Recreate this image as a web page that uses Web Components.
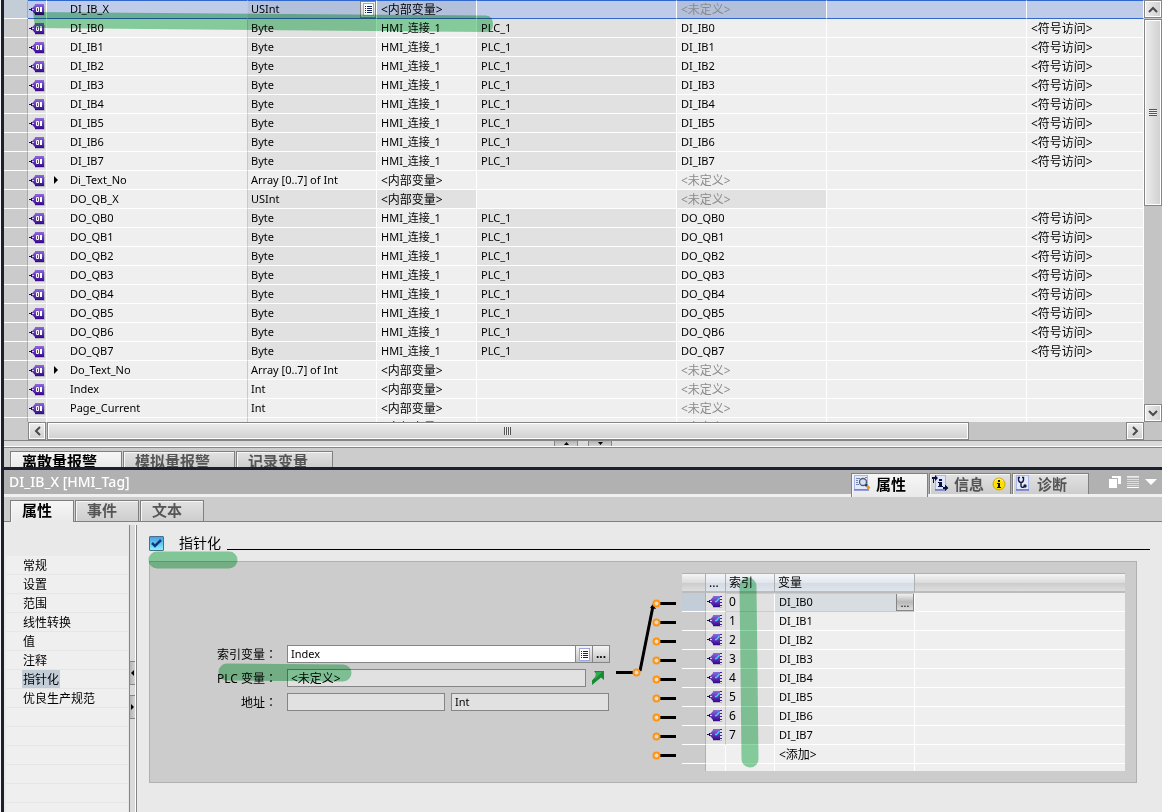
<!DOCTYPE html>
<html lang="zh-CN">
<head>
<meta charset="UTF-8">
<title>HMI_Tag</title>
<style>
    html, body {
        height: 100%;
        margin: 0;
    }
    body {
        overflow: hidden;
        font-family: "Noto Sans", "Noto Sans CJK SC", sans-serif;
        font-size: 11px;
        color: #000;
        background: #f4f4f4;
    }
</style>
</head>
<body>
<hmi-workspace>
    <tag-editor slot="editor"></tag-editor>
    <tag-inspector slot="inspector" heading="DI_IB_X [HMI_Tag]">
        <side-nav slot="nav" items="常规,设置,范围,线性转换,值,注释,指针化,优良生产规范" current="指针化"></side-nav>
        <pointer-settings></pointer-settings>
    </tag-inspector>
</hmi-workspace>

<script>
const ICONS = {
    tag: `<svg width="17" height="13" viewBox="0 0 17 13">
        <defs><linearGradient id="g" x2="0" y2="1"><stop stop-color="#8f68de"/><stop offset="1" stop-color="#36078e"/></linearGradient></defs>
        <path d="M6 12.500H15.500V3" fill="none" stroke="#b9b9c2"/>
        <path d="M2 6.500L6 2V1H15V12H6V11Z" fill="url(#g)"/>
        <path d="M0 6.500H3M2.500 5V8" stroke="#1e0a5a" fill="none"/>
        <path d="M3 6h2v1h-2z" fill="#d8ccf6"/>
        <path d="M7.500 4.500H9.500V8.500H7.500Z" fill="none" stroke="#fff"/>
        <path d="M12 4V9" stroke="#fff" stroke-width="2"/>
    </svg>`,
    link: `<svg width="17" height="13" viewBox="0 0 17 13">
        <defs><linearGradient id="g" x2="0" y2="1"><stop stop-color="#8f68de"/><stop offset="1" stop-color="#36078e"/></linearGradient></defs>
        <path d="M6 12.500H15" stroke="#b4b4bc"/>
        <path d="M2 6.500L6 2V1H13V12H6V11Z" fill="url(#g)"/>
        <path d="M0 6.500H3M2.500 5V8" stroke="#1e0a5a" fill="none"/>
        <path d="M3 6h2v1h-2z" fill="#d8ccf6"/>
        <path d="M13 1.500H15M13 4.500H15M13 7.500H15M13 10.500H15" stroke="#4a1aa6"/>
        <path d="M8 6.500H9.500L12.500 3" fill="none" stroke="#35d4f6" stroke-width="1.300"/>
    </svg>`,
    list: `<svg width="11" height="13" viewBox="0 0 11 13">
        <rect x=".5" y=".5" width="10" height="12" fill="#fff" stroke="#9aa7dc"/>
        <path d="M2 3.500H3M2 5.500H3M2 7.500H3M2 9.500H3M4 3.500H9M4 5.500H9M4 7.500H9M4 9.500H9" stroke="#14225e"/>
    </svg>`,
    props: `<svg width="17" height="16" viewBox="0 0 17 16">
        <rect x=".5" y=".5" width="13" height="14" fill="#e4eafc" stroke="#a9b6ee"/>
        <path d="M0 15H15" stroke="#3c50cc" stroke-width="1"/>
        <path d="M2 3.500H6M2 5.500H4M2 7.500H4M2 9.500H5M11 2.500H13" stroke="#7485b4"/>
        <circle cx="9" cy="7" r="3.500" fill="#cfe2f4" stroke="#555a72" stroke-width="1.300"/>
        <path d="M11.500 9.500L13 11" stroke="#1c3a86" stroke-width="2.500"/>
        <path d="M13 11L15.500 13.500" stroke="#e09a18" stroke-width="2.500"/>
    </svg>`,
    info: `<svg width="17" height="16" viewBox="0 0 17 16">
        <rect x="3.500" y=".5" width="10" height="14" fill="#dfe6fb" stroke="#a9b6ee"/>
        <path d="M3 15H14" stroke="#3c50cc"/>
        <path d="M0 2H3V0L6 3L3 6V4H0Z" fill="#0b0f45"/>
        <path d="M1.500 4V8" stroke="#0b0f45"/>
        <path d="M7 4H10V6H7ZM6 7H10V11H11V12H6V11H7V8H6Z" fill="#0b0f45"/>
        <path d="M11 12H13V9.500L16.500 13L13 16V14H11Z" fill="#0b0f45"/>
    </svg>`,
    badge: `<svg width="14" height="14" viewBox="0 0 14 14">
        <circle cx="7" cy="7" r="6" fill="#fbe000" stroke="#d0a800"/>
        <path d="M3 4Q7 0 11 4" stroke="#fff6a0" fill="none"/>
        <path d="M6 3H8V5H6ZM5 6H8V10H9V11H5V10H6V7H5Z" fill="#111"/>
    </svg>`,
    diag: `<svg width="17" height="16" viewBox="-1 0 17 16">
        <rect x=".5" y=".5" width="12" height="14" fill="#e4eafc" stroke="#a9b6ee"/>
        <path d="M0 15H13" stroke="#3c50cc"/>
        <path d="M4 2.500H2.500V5Q3 7.500 5 7.500Q7 7.500 7.500 5V2.500H6M5 8V11Q5.500 13 8 12" fill="none" stroke="#15193f" stroke-width="1.400"/>
        <circle cx="9" cy="11" r="1.700" fill="#15193f"/>
    </svg>`,
    windows: `<svg width="12" height="12" viewBox="0 0 12 12"><path d="M3 0H12V8H9V2H3Z" fill="#fff"/><path d="M0 3H8V12H0Z" fill="#fff"/></svg>`,
    rows: `<svg width="12" height="12" viewBox="0 0 12 12"><path d="M0 .5H12M0 3.500H12M0 5.500H12M0 7.500H12M0 9.500H12" stroke="#dcdcdc"/><path d="M0 1H12M0 11.500H12" stroke="#fff"/></svg>`,
    drop: `<svg width="12" height="12" viewBox="0 0 12 12"><path d="M0 3H12L6 9Z" fill="#fff"/></svg>`,
    jump: `<svg width="14" height="14" viewBox="0 0 14 14"><path d="M3 0H13V9L10 6.500L1 14V9.500L6 4Z" fill="#168a34"/><path d="M5 1H11L4 8.500Z" fill="#2faa4c"/></svg>`,
    expand: `<svg width="4" height="8" viewBox="0 0 4 8"><path d="M0 0L4 4L0 8Z"/></svg>`,
    up: `<svg width="10" height="7" viewBox="0 0 10 7"><path d="M1 6L5 2L9 6" fill="none" stroke="#4a4a4a" stroke-width="2"/></svg>`,
    down: `<svg width="10" height="7" viewBox="0 0 10 7"><path d="M1 1L5 5L9 1" fill="none" stroke="#4a4a4a" stroke-width="2"/></svg>`,
    left: `<svg width="7" height="10" viewBox="0 0 7 10"><path d="M6 1L2 5L6 9" fill="none" stroke="#4a4a4a" stroke-width="2"/></svg>`,
    right: `<svg width="7" height="10" viewBox="0 0 7 10"><path d="M1 1L5 5L1 9" fill="none" stroke="#4a4a4a" stroke-width="2"/></svg>`,
    miniup: `<svg width="5" height="3" viewBox="0 0 5 3"><path d="M0 3L2.500 0L5 3Z"/></svg>`,
    minidown: `<svg width="5" height="3" viewBox="0 0 5 3"><path d="M0 0L2.500 3L5 0Z"/></svg>`,
    minileft: `<svg width="3" height="6" viewBox="0 0 3 6"><path d="M3 0L0 3L3 6Z"/></svg>`,
    miniright: `<svg width="3" height="6" viewBox="0 0 3 6"><path d="M0 0L3 3L0 6Z"/></svg>`
};

class UiIcon extends HTMLElement {
    constructor() {
        super();
        this.attachShadow({ mode: 'open' });
    }

    connectedCallback() {
        this.shadowRoot.innerHTML = `
            <style>
                :host { display: inline-flex; flex: none; }
                svg { display: block; }
            </style>
            ${ICONS[this.getAttribute('name')] || ''}
        `;
    }
}

// Stacks the editor above the inspector, with the dark window frame on the left
class HmiWorkspace extends HTMLElement {
    constructor() {
        super();
        this.attachShadow({ mode: 'open' });
        this.shadowRoot.innerHTML = `
            <style>
                :host {
                    display: flex;
                    flex-direction: column;
                    box-sizing: border-box;
                    height: 100vh;
                    margin-left: 1px;
                    border-left: 3px solid #1a2030;
                    background: #ccc;
                }
                .editor { flex: 467 1 0; min-height: 0; display: flex; }
                .inspector {
                    flex: 342 1 0;
                    min-height: 0;
                    display: flex;
                    border-top: 3px solid #1a2030;
                }
                ::slotted(*) { flex: 1; min-width: 0; }
            </style>
            <div class="editor"><slot name="editor"></slot></div>
            <div class="inspector"><slot name="inspector"></slot></div>
        `;
    }
}

class ScrollBar extends HTMLElement {
    constructor() {
        super();
        this.attachShadow({ mode: 'open' });
    }

    connectedCallback() {
        const vertical = this.hasAttribute('vertical');
        const size = this.getAttribute('size');
        const rest = this.getAttribute('rest');
        this.shadowRoot.innerHTML = `
            <style>
                :host {
                    display: flex;
                    flex-direction: ${vertical ? 'column' : 'row'};
                    gap: 1px;
                    background: #c4c4c4;
                }
                button, .thumb {
                    box-sizing: border-box;
                    display: flex;
                    align-items: center;
                    justify-content: center;
                    padding: 0;
                    border: 1px solid #858585;
                    box-shadow: inset 0 0 0 1px #fff;
                    background: linear-gradient(${vertical ? 'to right' : 'to bottom'}, #ececec, #d0d0d0);
                }
                button { flex: none; width: 18px; height: 18px; }
                .thumb { flex: ${size} 1 0; }
                .rest { flex: ${rest} 1 0; }
                .grip {
                    width: ${vertical ? '8px' : '7px'};
                    height: ${vertical ? '7px' : '8px'};
                    background: repeating-linear-gradient(${vertical ? 'to bottom' : 'to right'}, #555 0 1px, #eee 1px 2px);
                }
            </style>
            <button aria-label="${vertical ? '向上' : '向左'}"><ui-icon name="${vertical ? 'up' : 'left'}"></ui-icon></button>
            <div class="thumb"><div class="grip"></div></div>
            <div class="rest"></div>
            <button aria-label="${vertical ? '向下' : '向右'}"><ui-icon name="${vertical ? 'down' : 'right'}"></ui-icon></button>
        `;
    }
}

class SplitBar extends HTMLElement {
    constructor() {
        super();
        this.attachShadow({ mode: 'open' });
    }

    connectedCallback() {
        const vertical = this.hasAttribute('vertical');
        const icons = vertical ? ['minileft', 'miniright'] : ['miniup', 'minidown'];
        this.shadowRoot.innerHTML = `
            <style>
                :host {
                    display: flex;
                    flex: none;
                    flex-direction: ${vertical ? 'column' : 'row'};
                    justify-content: center;
                    gap: 10px;
                    box-sizing: border-box;
                    ${vertical ? 'width' : 'height'}: 8px;
                    border: 0 solid #858585;
                    border-width: ${vertical ? '0 1px' : '1px 0'};
                    box-shadow: inset ${vertical ? '-1px 0' : '0 -1px'} #fff;
                    background: #dadada;
                }
                button {
                    display: flex;
                    align-items: center;
                    justify-content: center;
                    box-sizing: border-box;
                    padding: 0;
                    border: 0 solid #858585;
                    ${vertical
                        ? 'width: 5px; height: 24px; border-width: 1px 0;'
                        : 'width: 24px; height: 5px; border-width: 0 1px;'}
                    background: linear-gradient(${vertical ? 'to right' : 'to bottom'}, #b4b4b4, #d4d4d4);
                }
            </style>
            ${icons.map(name => `<button aria-label="${name}"><ui-icon name="${name}"></ui-icon></button>`).join('')}
        `;
    }
}

class TabItem extends HTMLElement {
    constructor() {
        super();
        this.attachShadow({ mode: 'open' });
        this.shadowRoot.innerHTML = `
            <style>
                :host { display: flex; }
                button {
                    display: flex;
                    align-items: start;
                    gap: 5px;
                    box-sizing: border-box;
                    padding: var(--tab-padding, 0 21px 0 11px);
                    border: 1px solid #808080;
                    border-bottom: 0;
                    box-shadow: inset 1px 1px #f6f6f6;
                    background: linear-gradient(#e2e2e2, #cdcdcd);
                    color: #555;
                    font: bold 15px/18px "Noto Sans", "Noto Sans CJK SC", sans-serif;
                    white-space: nowrap;
                }
                :host([active]) button {
                    background: linear-gradient(#f6f6f6, #e9e9e9);
                    color: #000;
                }
            </style>
            <button><slot></slot></button>
        `;
    }
}

const BYTE_TAGS = prefix => Array.from({ length: 8 }, (_, i) => ({
    name: `${prefix}${i}`, type: 'Byte', conn: 'HMI_连接_1', plc: 'PLC_1',
    plcTag: `${prefix}${i}`, access: '<符号访问>', off: ['type', 'plc']
}));

const INNER_TAG = (name, type, extra = {}) => ({
    name, type, conn: '<内部变量>', plc: '', plcTag: '<未定义>', access: '', off: [], ...extra
});

const TAGS = [
    INNER_TAG('DI_IB_X', 'USInt', { off: ['type', 'conn', 'plcTag'], selected: true }),
    ...BYTE_TAGS('DI_IB'),
    INNER_TAG('Di_Text_No', 'Array [0..7] of Int', { group: true }),
    INNER_TAG('DO_QB_X', 'USInt', { off: ['type', 'conn', 'plcTag'] }),
    ...BYTE_TAGS('DO_QB'),
    INNER_TAG('Do_Text_No', 'Array [0..7] of Int', { group: true }),
    INNER_TAG('Index', 'Int'),
    INNER_TAG('Page_Current', 'Int'),
    INNER_TAG('', '')
];

function escapeText(text) {
    return text.replace(/&/g, '&amp;').replace(/</g, '&lt;').replace(/>/g, '&gt;');
}

class TagTable extends HTMLElement {
    constructor() {
        super();
        this.attachShadow({ mode: 'open' });
        this.shadowRoot.innerHTML = `
            <style>
                :host { display: block; overflow: hidden; background: #efefef; }
                table {
                    width: 100%;
                    table-layout: fixed;
                    border-collapse: separate;
                    border-spacing: 0;
                }
                td {
                    box-sizing: border-box;
                    height: 19px;
                    padding: 0 0 0 4px;
                    border: 0 solid #fff;
                    border-width: 0 1px 1px 0;
                    background: #efefef;
                    line-height: 18px;
                    vertical-align: top;
                    white-space: nowrap;
                    overflow: hidden;
                }
                td.gutter { background: #cbcbcb; border-right-color: #a8a8a8; }
                td.icon { padding: 3px 0 0 1px; background: #e1e1e1; line-height: 0; }
                td.name { padding: 0; border-right-color: #c8c8c8; }
                td.type { padding-left: 3px; }
                td.off { background: #e1e1e1; }
                td.cn { padding-top: 1px; font-size: 12px; line-height: 17px; }
                td.undef { color: #8a8a8a; }
                .label { display: flex; align-items: center; }
                .toggle { display: flex; width: 16px; padding-left: 7px; }
                .kind { display: flex; justify-content: space-between; }
                .kind button {
                    display: flex;
                    align-items: center;
                    justify-content: center;
                    width: 16px;
                    height: 17px;
                    padding: 0;
                    border: 1px solid #858585;
                    box-sizing: border-box;
                    background: linear-gradient(#f6f6f6, #cfcfcf);
                }
                tr.selected td {
                    border-top: 1px solid #2f67cc;
                    border-bottom-color: #2f67cc;
                    background: #bfcce9;
                    line-height: 16px;
                }
                tr.selected td.icon { padding-top: 2px; line-height: 0; }
                tr.selected td.off { background: #b3c0dc; }
                tr.selected td.gutter { background: #c3cdd8; border-top-color: #c3cdd8; border-bottom-color: #fff; }
            </style>
            <table>
                <colgroup>
                    <col style="width: 24px"><col style="width: 19px"><col style="width: 201px">
                    <col style="width: 129px"><col style="width: 100px"><col style="width: 200px">
                    <col style="width: 150px"><col style="width: 200px"><col>
                </colgroup>
                <tbody></tbody>
            </table>
        `;
        this.shadowRoot.querySelector('tbody').innerHTML = TAGS.map(tag => this.renderRow(tag)).join('');
    }

    renderRow(tag) {
        const cls = key => {
            const names = [key];
            if (tag.off.includes(key)) names.push('off');
            if ((tag[key] || '').startsWith('<')) names.push('cn');
            if (tag[key] === '<未定义>') names.push('undef');
            return names.join(' ');
        };
        return `
            <tr class="${tag.selected ? 'selected' : ''}">
                <td class="gutter"></td>
                <td class="icon"><ui-icon name="tag"></ui-icon></td>
                <td class="name"><div class="label">
                    <span class="toggle">${tag.group ? '<ui-icon name="expand"></ui-icon>' : ''}</span>${tag.name}
                </div></td>
                <td class="${cls('type')}"><div class="kind">${tag.type}${tag.selected
                    ? '<button aria-label="选择类型"><ui-icon name="list"></ui-icon></button>' : ''}</div></td>
                <td class="${cls('conn')}">${escapeText(tag.conn)}</td>
                <td class="${cls('plc')}">${tag.plc}</td>
                <td class="${cls('plcTag')}">${escapeText(tag.plcTag)}</td>
                <td></td>
                <td class="${cls('access')}">${escapeText(tag.access)}</td>
            </tr>
        `;
    }
}

class TagEditor extends HTMLElement {
    constructor() {
        super();
        this.attachShadow({ mode: 'open' });
        this.shadowRoot.innerHTML = `
            <style>
                :host {
                    position: relative;
                    display: flex;
                    flex-direction: column;
                    overflow: hidden;
                    background: #ccc;
                }
                .view {
                    flex: 1;
                    min-height: 0;
                    display: grid;
                    grid-template: minmax(0, 1fr) 18px / minmax(0, 1fr) 18px;
                    background: #c4c4c4;
                }
                .bottom { display: flex; min-width: 0; }
                .bottom::before { content: ""; width: 24px; background: #cbcbcb; }
                .bottom scroll-bar { flex: 1; }
                .tabs {
                    display: flex;
                    gap: 1px;
                    height: 16px;
                    padding: 3px 0 0 6px;
                    --tab-padding: 0 24px 0 11px;
                }
            </style>
            <div class="view">
                <tag-table></tag-table>
                <scroll-bar vertical size="187" rest="199"></scroll-bar>
                <div class="bottom"><scroll-bar size="924" rest="156"></scroll-bar></div>
            </div>
            <split-bar></split-bar>
            <div class="tabs">
                <tab-item active>离散量报警</tab-item>
                <tab-item>模拟量报警</tab-item>
                <tab-item>记录变量</tab-item>
            </div>
            <marker-stroke style="left: 0; top: 0"></marker-stroke>
        `;
    }
}

// Translucent highlighter stroke laid over the content below it
class MarkerStroke extends HTMLElement {
    constructor() {
        super();
        this.attachShadow({ mode: 'open' });
    }

    connectedCallback() {
        const line = this.getAttribute('line');
        const shape = line
            ? `<path d="${line}" stroke="#8ed8a5" stroke-width="17" stroke-linecap="round" fill="none"/>`
            : `<path d="M29 12L482 15.500Q489 16 489 24Q489 32 482 32L31 28Z" fill="#8ed8a5"/>`;
        this.shadowRoot.innerHTML = `
            <style>
                :host {
                    position: absolute;
                    pointer-events: none;
                    mix-blend-mode: multiply;
                }
                svg { display: block; overflow: visible; }
            </style>
            <svg width="1" height="1">${shape}</svg>
        `;
    }
}

class TagInspector extends HTMLElement {
    constructor() {
        super();
        this.attachShadow({ mode: 'open' });
    }

    connectedCallback() {
        this.shadowRoot.innerHTML = `
            <style>
                :host { display: flex; flex-direction: column; background: #e9e9e9; }
                header {
                    display: flex;
                    flex: none;
                    height: 24px;
                    border-bottom: 3px solid #f0f0f0;
                    background: #b1b1b1;
                }
                h1 {
                    flex: 1;
                    margin: 0;
                    padding-left: 5px;
                    color: #fff;
                    font-size: 14px;
                    font-weight: 500;
                    line-height: 24px;
                }
                .views { display: flex; gap: 1px; padding-top: 3px; --tab-padding: 1px 18px 0 2px; }
                .views .note { --tab-padding: 1px 4px 0 2px; }
                .views ui-icon + span { margin-right: 3px; }
                .views ui-icon[name=badge] { margin-top: 2px; }
                .views tab-item[active] { margin-bottom: -3px; }
                .tools { display: flex; gap: 6px; padding: 6px 5px 0 20px; }
                .tools button { display: flex; padding: 0; border: 0; background: none; height: 12px; }
                .tabs {
                    display: flex;
                    flex: none;
                    gap: 1px;
                    height: 21px;
                    padding: 3px 0 0 6px;
                    border-bottom: 1px solid #808080;
                    background: #ccc;
                }
                .tabs tab-item[active] { margin-bottom: -1px; }
                .body { flex: 1; display: flex; min-height: 0; overflow: hidden; }
                split-bar { margin: 3px 0 -43px; }
                slot[name=nav] { display: flex; }
                main { flex: 1; min-width: 0; }
            </style>
            <header>
                <h1>${this.getAttribute('heading')}</h1>
                <div class="views">
                    <tab-item active><ui-icon name="props"></ui-icon><span>属性</span></tab-item>
                    <tab-item class="note"><ui-icon name="info"></ui-icon><span>信息</span><ui-icon name="badge"></ui-icon></tab-item>
                    <tab-item><ui-icon name="diag"></ui-icon><span>诊断</span></tab-item>
                </div>
                <div class="tools">
                    <button aria-label="浮动"><ui-icon name="windows"></ui-icon></button>
                    <button aria-label="排列"><ui-icon name="rows"></ui-icon></button>
                    <button aria-label="折叠"><ui-icon name="drop"></ui-icon></button>
                </div>
            </header>
            <div class="tabs">
                <tab-item active>属性</tab-item>
                <tab-item>事件</tab-item>
                <tab-item>文本</tab-item>
            </div>
            <div class="body">
                <slot name="nav"></slot>
                <split-bar vertical></split-bar>
                <main><slot></slot></main>
            </div>
        `;
    }
}

class SideNav extends HTMLElement {
    constructor() {
        super();
        this.attachShadow({ mode: 'open' });
    }

    connectedCallback() {
        const items = this.getAttribute('items').split(',');
        const current = this.getAttribute('current');
        this.shadowRoot.innerHTML = `
            <style>
                :host { display: block; width: 125px; padding-top: 34px; box-sizing: border-box; overflow: hidden; }
                nav {
                    height: 100%;
                    margin: 0 1px 0 2px;
                    background: repeating-linear-gradient(#efefef 0 18px, #e6e6e6 18px 19px);
                }
                a {
                    display: block;
                    width: max-content;
                    height: 18px;
                    margin: 0 0 1px 16px;
                    padding: 0 1px;
                    color: #000;
                    font-size: 12px;
                    line-height: 20px;
                    text-decoration: none;
                }
                a[aria-current] { background: #c3cdd8; }
            </style>
            <nav>${items.map(item =>
                `<a href="#"${item === current ? ' aria-current="page"' : ''}>${item}</a>`).join('')}</nav>
        `;
    }
}

// Rotary switch: the arm joins the index tag to the selected contact
class SwitchDiagram extends HTMLElement {
    constructor() {
        super();
        this.attachShadow({ mode: 'open' });
        const contacts = Array.from({ length: 9 }, (_, i) => {
            const y = 30.5 + i * 19;
            return `<path d="M43 ${y}H60" stroke="#000" stroke-width="3"/>
                <circle cx="40.5" cy="${y}" r="3" fill="#e8dccb" stroke="#ff9410" stroke-width="2"/>`;
        }).join('');
        this.shadowRoot.innerHTML = `
            <style>
                :host { display: block; flex: none; width: 66px; }
                svg { display: block; }
            </style>
            <svg width="66" height="198" viewBox="0 0 66 198">
                <path d="M0 99.500H18" stroke="#000" stroke-width="3"/>
                <path d="M24 98L37 33" stroke="#000" stroke-width="3"/>
                <path d="M34 35L37 31L40 36Z"/>
                <circle cx="20.500" cy="99.500" r="3" fill="#e8dccb" stroke="#ff9410" stroke-width="2"/>
                ${contacts}
            </svg>
        `;
    }
}

class IndexTable extends HTMLElement {
    constructor() {
        super();
        this.attachShadow({ mode: 'open' });
        const rows = Array.from({ length: 8 }, (_, i) => `
            <tr class="${i === 0 ? 'selected' : ''}">
                <td class="gutter"></td>
                <td class="icon"><ui-icon name="link"></ui-icon></td>
                <td class="index">${i}</td>
                <td><div class="var">DI_IB${i}${i === 0 ? '<button aria-label="选择变量">...</button>' : ''}</div></td>
                <td></td>
            </tr>
        `).join('');
        this.shadowRoot.innerHTML = `
            <style>
                :host { display: block; position: relative; height: 198px; }
                .clip { height: 198px; overflow: hidden; }
                table {
                    width: 100%;
                    table-layout: fixed;
                    border-collapse: separate;
                    border-spacing: 0;
                    text-align: left;
                }
                th {
                    box-sizing: border-box;
                    height: 20px;
                    padding: 0 0 0 3px;
                    border: 1px solid #b0b0b0;
                    border-width: 1px 1px 2px 0;
                    border-bottom-color: #bcbcbc;
                    background: linear-gradient(#f4f6f8, #e2e7ee 50%, #d3dae4 50%, #dfe5ec);
                    font-size: 12px;
                    font-weight: normal;
                    line-height: 17px;
                }
                th.plain { background: linear-gradient(#f4f4f4, #dcdcdc 50%, #cacaca 50%, #dedede); }
                th:last-child { border-right: 0; }
                td {
                    box-sizing: border-box;
                    height: 19px;
                    padding: 0 0 0 4px;
                    border: 0 solid #fff;
                    border-width: 0 1px 1px 0;
                    background: #efefef;
                    line-height: 18px;
                    vertical-align: top;
                    white-space: nowrap;
                    overflow: hidden;
                }
                td:last-child { border-right: 0; }
                td.gutter { background: #ccc; border-right-color: #b0b0b0; }
                td.icon { padding: 2px 0 0 1px; background: #e1e1e1; border-right-color: #c4c4c4; line-height: 0; }
                td.index { padding-left: 3px; background: #e1e1e1; font-size: 12px; }
                td.cn { padding-top: 1px; font-size: 12px; line-height: 17px; }
                td.empty { background: #efefef; }
                .selected td.gutter { background: #c3cdd8; }
                .selected td:nth-child(4) { background: #d8dde2; }
                .selected td:nth-child(3), .selected td:nth-child(4) {
                    border-top: 1px solid #c3cdd8;
                    border-bottom-color: #c3cdd8;
                    line-height: 16px;
                }
                .var { display: flex; justify-content: space-between; }
                .var button {
                    box-sizing: border-box;
                    width: 18px;
                    height: 17px;
                    padding: 0;
                    border: 1px solid #858585;
                    border-width: 0 1px 1px 1px;
                    background: linear-gradient(#f0f0f0, #b8b8b8 50%, #dcdcdc);
                    font: 11px/15px "Noto Sans", sans-serif;
                }
            </style>
            <div class="clip">
                <table>
                    <colgroup>
                        <col style="width: 24px"><col style="width: 20px"><col style="width: 49px">
                        <col style="width: 140px"><col>
                    </colgroup>
                    <thead>
                        <tr><th class="plain"></th><th>...</th><th>索引</th><th>变量</th><th class="plain"></th></tr>
                    </thead>
                    <tbody>
                        ${rows}
                        <tr><td class="gutter"></td><td class="empty"></td><td class="index empty"></td><td class="cn">&lt;添加&gt;</td><td></td></tr>
                        <tr><td class="gutter"></td><td class="empty"></td><td class="index empty"></td><td></td><td></td></tr>
                    </tbody>
                </table>
            </div>
            <marker-stroke line="M66 13L68 186" style="left: 0; top: 0"></marker-stroke>
        `;
    }
}

class PointerSettings extends HTMLElement {
    constructor() {
        super();
        this.attachShadow({ mode: 'open' });
        this.shadowRoot.innerHTML = `
            <style>
                :host { display: block; position: relative; padding: 11px 25px 0 12px; }
                .title { display: flex; align-items: center; height: 20px; }
                .title input {
                    appearance: none;
                    box-sizing: border-box;
                    width: 15px;
                    height: 15px;
                    margin: 0 15px 0 0;
                    border: 1px solid #4a6d8c;
                    border-radius: 1px;
                    background: linear-gradient(#4a9fe4, #86f0ff);
                }
                .check { position: relative; display: flex; }
                .check svg { position: absolute; left: 0; top: 0; pointer-events: none; }
                .title label { font-size: 14px; line-height: 20px; }
                .title::after {
                    content: "";
                    flex: 1;
                    align-self: flex-end;
                    margin: 0 -13px 3px 6px;
                    border-bottom: 1px solid #000;
                }
                .panel {
                    display: flex;
                    margin-top: 8px;
                    padding: 11px;
                    border: 1px solid #b0b0b0;
                    background: #ccc;
                }
                form {
                    flex: none;
                    display: grid;
                    grid-template-columns: 116px 323px;
                    grid-auto-rows: 18px;
                    gap: 6px 10px;
                    align-content: start;
                    padding-top: 72px;
                    margin-right: 6px;
                }
                form label { font-size: 12px; line-height: 18px; text-align: right; white-space: nowrap; }
                .colon { font-family: "Noto Sans CJK TC", sans-serif; }
                .field { display: flex; min-width: 0; }
                form input {
                    box-sizing: border-box;
                    flex: 1;
                    min-width: 0;
                    height: 18px;
                    padding: 0 3px 1px;
                    border: 1px solid #858585;
                    background: #fff;
                    color: #000;
                    font: 11px/15px "Noto Sans", "Noto Sans CJK SC", sans-serif;
                }
                form input[readonly] { background: #e1e1e1; }
                form input.cn { padding-bottom: 0; font-size: 12px; }
                .field button {
                    display: flex;
                    align-items: center;
                    justify-content: center;
                    box-sizing: border-box;
                    width: 17px;
                    height: 18px;
                    padding: 0;
                    border: 1px solid #858585;
                    border-left: 0;
                    background: linear-gradient(#f4f4f4, #c4c4c4);
                    font: bold 12px/12px "Noto Sans", sans-serif;
                }
                .field .jump { width: 24px; border: 0; background: none; }
                .pair { gap: 6px; padding-right: 1px; }
                index-table { flex: 1; min-width: 0; }
            </style>
            <div class="title">
                <span class="check">
                    <input type="checkbox" id="pointer" checked>
                    <svg width="15" height="15" viewBox="0 0 15 15"><path d="M3 7L6 10L12 4" fill="none" stroke="#103a80" stroke-width="2.500"/></svg>
                </span>
                <label for="pointer">指针化</label>
            </div>
            <div class="panel">
                <form>
                    <label for="index">索引变量<span class="colon" lang="zh-TW">：</span></label>
                    <div class="field">
                        <input id="index" value="Index">
                        <button type="button" aria-label="列表"><ui-icon name="list"></ui-icon></button>
                        <button type="button" aria-label="浏览">...</button>
                    </div>
                    <label for="plc">PLC 变量<span class="colon" lang="zh-TW">：</span></label>
                    <div class="field">
                        <input id="plc" class="cn" value="&lt;未定义&gt;" readonly>
                        <button type="button" class="jump" aria-label="转到"><ui-icon name="jump"></ui-icon></button>
                    </div>
                    <label for="address">地址<span class="colon" lang="zh-TW">：</span></label>
                    <div class="field pair">
                        <input id="address" readonly>
                        <input aria-label="类型" value="Int" readonly>
                    </div>
                </form>
                <switch-diagram></switch-diagram>
                <index-table></index-table>
            </div>
            <marker-stroke line="M20 38H92" style="left: 0; top: 0"></marker-stroke>
            <marker-stroke line="M90 150L206 151" style="left: 0; top: 0"></marker-stroke>
        `;
    }
}

customElements.define('ui-icon', UiIcon);
customElements.define('marker-stroke', MarkerStroke);
customElements.define('scroll-bar', ScrollBar);
customElements.define('split-bar', SplitBar);
customElements.define('tab-item', TabItem);
customElements.define('tag-table', TagTable);
customElements.define('tag-editor', TagEditor);
customElements.define('side-nav', SideNav);
customElements.define('switch-diagram', SwitchDiagram);
customElements.define('index-table', IndexTable);
customElements.define('pointer-settings', PointerSettings);
customElements.define('tag-inspector', TagInspector);
customElements.define('hmi-workspace', HmiWorkspace);
</script>
</body>
</html>
